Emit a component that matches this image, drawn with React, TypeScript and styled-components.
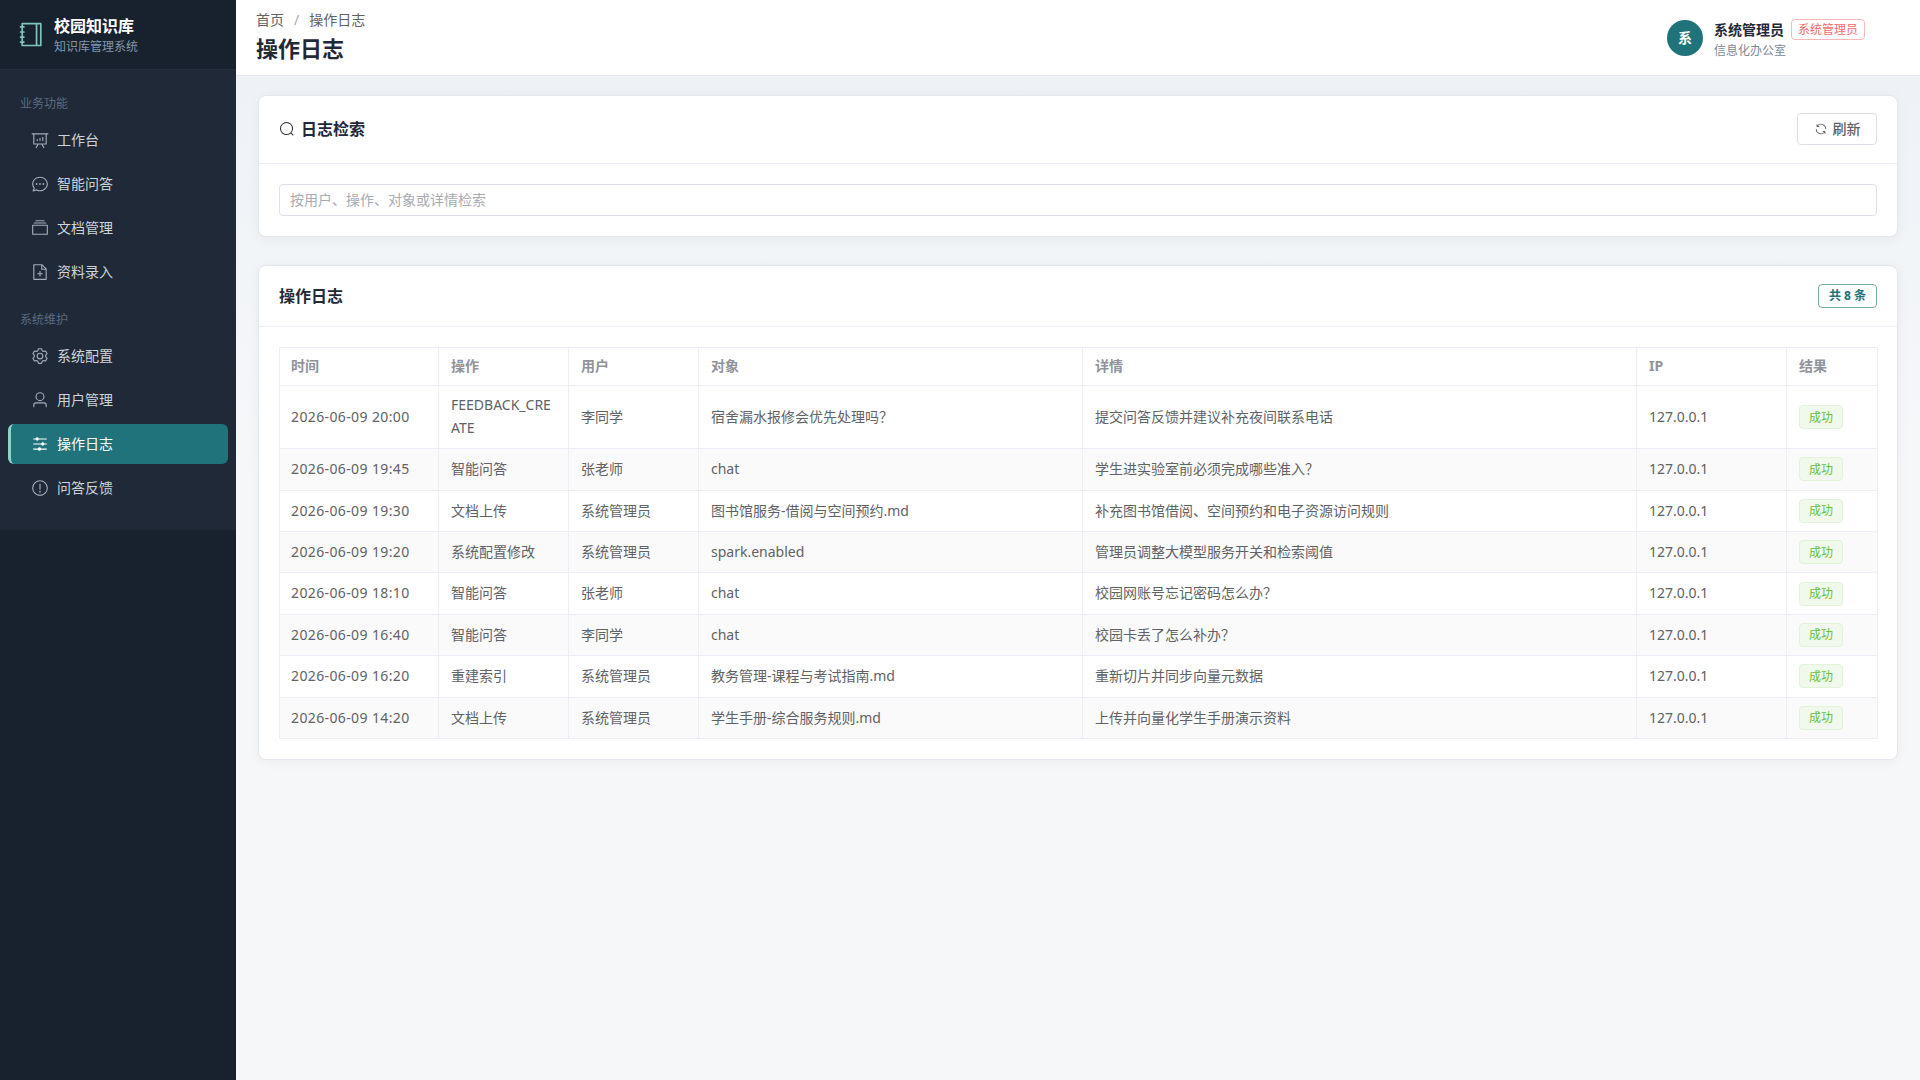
// src/pages/OperationLog.tsx

import styled, { createGlobalStyle } from "styled-components";

const GlobalStyle = createGlobalStyle`
  html, body {
    margin: 0;
    padding: 0;
    height: 100%;
  }
  body {
    font-family: "Noto Sans", "Noto Sans CJK SC", sans-serif;
    font-size: 14px;
    line-height: 1.65;
    color: #1f2937;
  }
  * {
    box-sizing: border-box;
  }
`;

const Shell = styled.div`
  display: flex;
  min-height: 100vh;
`;

const Sidebar = styled.aside`
  flex: 0 0 236px;
  background-color: #18222f;
`;

const Brand = styled.div`
  display: flex;
  align-items: center;
  gap: 9px;
  height: 70px;
  padding-left: 18px;
  border-bottom: 1px solid #242e3c;
`;

const BrandIcon = styled.svg`
  width: 27px;
  height: 27px;
  fill: #7fc6bd;
`;

const BrandText = styled.div`
  display: flex;
  flex-direction: column;
`;

const BrandTitle = styled.span`
  font-size: 16px;
  font-weight: 700;
  line-height: 22px;
  color: #ffffff;
`;

const BrandSub = styled.span`
  margin-top: 2px;
  font-size: 12px;
  line-height: 16px;
  color: #8496aa;
`;

const Nav = styled.nav`
  background-color: #1f2937;
  padding: 18px 8px 18px;
`;

const GroupLabel = styled.div<{ $first?: boolean }>`
  font-size: 12px;
  line-height: 20px;
  color: #5b6a80;
  padding-left: 12px;
  margin: ${(p) => (p.$first ? "6px 0 6px" : "18px 0 6px")};
`;

const MenuItem = styled.a<{ $active?: boolean }>`
  display: flex;
  align-items: center;
  gap: 8px;
  height: 40px;
  margin-bottom: 4px;
  padding-left: ${(p) => (p.$active ? "20px" : "23px")};
  border-radius: 6px;
  font-size: 14px;
  color: ${(p) => (p.$active ? "#ffffff" : "#cdd4dc")};
  background-color: ${(p) => (p.$active ? "#20737a" : "transparent")};
  border-left: ${(p) => (p.$active ? "3px solid #8fd3c8" : "none")};
  fill: ${(p) => (p.$active ? "#ffffff" : "#a3adb9")};
`;

const Icon = styled.svg`
  width: 18px;
  height: 18px;
  flex-shrink: 0;
`;

const Content = styled.div`
  flex: 1;
  min-width: 0;
  display: flex;
  flex-direction: column;
`;

const TopBar = styled.header`
  display: flex;
  align-items: center;
  justify-content: space-between;
  height: 76px;
  padding: 0 55px 0 20px;
  background-color: #ffffff;
  border-bottom: 1px solid #e4e7ed;
`;

const Breadcrumb = styled.div`
  display: flex;
  gap: 10px;
  margin-top: -2px;
  font-size: 14px;
  line-height: 20px;
  color: #606266;
`;

const Slash = styled.span`
  color: #a8abb2;
`;

const PageTitle = styled.h1`
  margin: 3px 0 0;
  font-size: 22px;
  font-weight: 700;
  line-height: 30px;
  color: #1f2937;
`;

const UserBox = styled.div`
  display: flex;
  align-items: center;
  gap: 11px;
`;

const Avatar = styled.div`
  width: 36px;
  height: 36px;
  border-radius: 50%;
  display: flex;
  align-items: center;
  justify-content: center;
  background-color: #20737a;
  color: #ffffff;
  font-size: 14px;
  font-weight: 600;
`;

const UserInfo = styled.div`
  padding-top: 2px;
`;

const UserRow = styled.div`
  display: flex;
  align-items: center;
  gap: 7px;
`;

const UserName = styled.span`
  font-size: 14px;
  font-weight: 600;
  color: #1f2937;
`;

const RoleTag = styled.span`
  height: 21px;
  padding: 0 6px;
  display: inline-flex;
  align-items: center;
  font-size: 12px;
  color: #f56c6c;
  border: 1px solid #fab6b6;
  border-radius: 4px;
  background-color: #ffffff;
`;

const UserDept = styled.div`
  margin-top: 2px;
  font-size: 12px;
  line-height: 16px;
  color: #7f8896;
`;

const Main = styled.main`
  flex: 1;
  padding: 19px 22px;
  display: flex;
  flex-direction: column;
  gap: 28px;
  background: linear-gradient(180deg, #eef2f6 0%, #f6f7f9 40%);
`;

const Card = styled.section`
  background-color: #ffffff;
  border: 1px solid #e4e7ed;
  border-radius: 8px;
  box-shadow: 0 2px 12px rgba(15, 23, 42, 0.05);
`;

const CardHeader = styled.div<{ $tall?: boolean }>`
  display: flex;
  align-items: center;
  justify-content: space-between;
  height: ${(p) => (p.$tall ? "68px" : "61px")};
  padding: ${(p) => (p.$tall ? "0 20px 1px" : "0 20px")};
  border-bottom: 1px solid #ebeef5;
`;

const CardTitle = styled.div`
  display: flex;
  align-items: center;
  gap: 6px;
  font-size: 16px;
  font-weight: 600;
  color: #1f2937;
  fill: #303133;
`;

const CardBody = styled.div`
  padding: 20px;
`;

const RefreshButton = styled.button`
  display: inline-flex;
  align-items: center;
  justify-content: center;
  gap: 5px;
  width: 80px;
  height: 32px;
  padding: 0 0 2px;
  font-family: inherit;
  font-size: 14px;
  font-weight: 500;
  color: #606266;
  fill: #606266;
  background-color: #ffffff;
  border: 1px solid #dcdfe6;
  border-radius: 4px;
`;

const SearchIcon = styled.svg`
  width: 16px;
  height: 16px;
`;

const RefreshIcon = styled.svg`
  width: 14px;
  height: 14px;
  margin-top: 2px;
`;

const SearchInput = styled.input`
  display: block;
  width: 100%;
  height: 32px;
  padding: 0 10px 2px;
  font-family: inherit;
  font-size: 14px;
  border: 1px solid #dcdfe6;
  border-radius: 4px;
  outline: none;

  &::placeholder {
    color: #a8abb2;
  }
`;

const CountTag = styled.span`
  height: 24px;
  padding: 0 10px;
  display: inline-flex;
  align-items: center;
  font-size: 12px;
  font-weight: 700;
  color: #20737a;
  background-color: #ffffff;
  border: 1px solid #79abaf;
  border-radius: 4px;
`;

const Table = styled.table`
  width: 100%;
  table-layout: fixed;
  border-collapse: collapse;
  border: 1px solid #ebeef5;
`;

const Th = styled.th`
  padding: 7px 12px 9px;
  font-size: 14px;
  font-weight: 700;
  line-height: 21px;
  text-align: left;
  color: #909399;
  border: 1px solid #ebeef5;

  &:first-child {
    padding-left: 11px;
  }
`;

const Td = styled.td<{ $date?: boolean; $tag?: boolean }>`
  height: 41.4px;
  padding: ${(p) => (p.$tag ? "8px 12px" : "7.4px 12px 8.6px")};
  font-size: 14px;
  line-height: 23.1px;
  color: #606266;
  border: 1px solid #ebeef5;
  word-break: break-all;
  letter-spacing: ${(p) => (p.$date ? "0.38px" : "normal")};

  &:first-child {
    padding-left: 11px;
  }
`;

const Row = styled.tr`
  &:nth-child(even) {
    background-color: #fafafa;
  }
`;

const SuccessTag = styled.span`
  display: inline-flex;
  align-items: center;
  justify-content: center;
  width: 44px;
  height: 24px;
  vertical-align: top;
  font-size: 12px;
  color: #67c23a;
  background-color: #f0f9eb;
  border: 1px solid #e1f3d8;
  border-radius: 4px;
`;

const paths: Record<string, string> = {
  notebook:
    "M192 128v768h640V128zm-32-64h704a32 32 0 0 1 32 32v832a32 32 0 0 1-32 32H160a32 32 0 0 1-32-32V96a32 32 0 0 1 32-32M672 128h64v768h-64zM96 192h128q32 0 32 32t-32 32H96q-32 0-32-32t32-32m0 192h128q32 0 32 32t-32 32H96q-32 0-32-32t32-32m0 192h128q32 0 32 32t-32 32H96q-32 0-32-32t32-32m0 192h128q32 0 32 32t-32 32H96q-32 0-32-32t32-32",
  board:
    "m665.216 768 110.848 192h-73.856L591.36 768H433.024L322.176 960H248.32l110.848-192H160a32 32 0 0 1-32-32V192H64a32 32 0 0 1 0-64h896a32 32 0 1 1 0 64h-64v544a32 32 0 0 1-32 32zM832 192H192v512h640zM352 448a32 32 0 0 1 32 32v64a32 32 0 0 1-64 0v-64a32 32 0 0 1 32-32m160-64a32 32 0 0 1 32 32v128a32 32 0 0 1-64 0V416a32 32 0 0 1 32-32m160-64a32 32 0 0 1 32 32v192a32 32 0 1 1-64 0V352a32 32 0 0 1 32-32",
  chat:
    "m174.72 855.68 135.296-45.12 23.68 11.84C388.096 849.536 448.576 864 512 864c211.84 0 384-166.784 384-352S723.84 160 512 160 128 326.784 128 512c0 69.12 24.96 139.264 70.848 199.232l22.08 28.8-46.272 115.584zm-45.248 82.56A32 32 0 0 1 89.6 896l58.368-145.92C94.72 680.32 64 596.864 64 512 64 299.904 256 96 512 96s448 203.904 448 416-192 416-448 416a461.06 461.06 0 0 1-206.912-48.384l-175.616 58.56zM512 563.2a51.2 51.2 0 1 1 0-102.4 51.2 51.2 0 0 1 0 102.4m192 0a51.2 51.2 0 1 1 0-102.4 51.2 51.2 0 0 1 0 102.4m-384 0a51.2 51.2 0 1 1 0-102.4 51.2 51.2 0 0 1 0 102.4",
  files:
    "M128 384v448h768V384zm-32-64h832a32 32 0 0 1 32 32v512a32 32 0 0 1-32 32H96a32 32 0 0 1-32-32V352a32 32 0 0 1 32-32m64-128h704v64H160zm96-128h512v64H256z",
  docAdd:
    "M832 384H576V128H192v768h640zm-26.496-64L640 154.496V320zM160 64h480l256 256v608a32 32 0 0 1-32 32H160a32 32 0 0 1-32-32V96a32 32 0 0 1 32-32m320 512V448h64v128h128v64H544v128h-64V640H352v-64z",
  setting:
    "M600.704 64a32 32 0 0 1 30.464 22.208l35.2 109.376c14.784 7.232 28.928 15.36 42.432 24.512l112.384-24.192a32 32 0 0 1 34.432 15.36L944.32 364.8a32 32 0 0 1-4.032 37.504l-77.12 85.12a357 357 0 0 1 0 49.024l77.12 85.248a32 32 0 0 1 4.032 37.504l-88.704 153.6a32 32 0 0 1-34.432 15.296L708.8 803.904c-13.44 9.088-27.648 17.28-42.368 24.512l-35.264 109.376A32 32 0 0 1 600.704 960H423.296a32 32 0 0 1-30.464-22.208L357.696 828.48a352 352 0 0 1-42.56-24.64l-112.32 24.256a32 32 0 0 1-34.432-15.36L79.68 659.2a32 32 0 0 1 4.032-37.504l77.12-85.248a357 357 0 0 1 0-48.896l-77.12-85.248A32 32 0 0 1 79.68 364.8l88.704-153.6a32 32 0 0 1 34.432-15.296l112.32 24.256c13.568-9.152 27.776-17.408 42.56-24.64l35.2-109.312A32 32 0 0 1 423.232 64H600.64zm-23.424 64H446.72l-36.352 113.088-24.512 11.968a294 294 0 0 0-34.816 20.096l-22.656 15.36-116.224-25.088-65.28 113.152 79.68 88.192-1.92 27.136a293 293 0 0 0 0 40.192l1.92 27.136-79.808 88.192 65.344 113.152 116.224-25.024 22.656 15.296a294 294 0 0 0 34.816 20.096l24.512 11.968L446.72 896h130.688l36.48-113.152 24.448-11.904a288 288 0 0 0 34.752-20.096l22.592-15.296 116.288 25.024 65.28-113.152-79.744-88.192 1.92-27.136a293 293 0 0 0 0-40.256l-1.92-27.136 79.808-88.128-65.344-113.152-116.288 24.96-22.592-15.232a288 288 0 0 0-34.752-20.096l-24.448-11.904L577.344 128zM512 320a192 192 0 1 1 0 384 192 192 0 0 1 0-384m0 64a128 128 0 1 0 0 256 128 128 0 0 0 0-256",
  user:
    "M512 512a192 192 0 1 0 0-384 192 192 0 0 0 0 384m0 64a256 256 0 1 1 0-512 256 256 0 0 1 0 512m320 320v-96a96 96 0 0 0-96-96H288a96 96 0 0 0-96 96v96a32 32 0 1 1-64 0v-96a160 160 0 0 1 160-160h448a160 160 0 0 1 160 160v96a32 32 0 1 1-64 0",
  operation:
    "M389.44 768a96.064 96.064 0 0 1 181.12 0H896v64H570.56a96.064 96.064 0 0 1-181.12 0H128v-64zm192-288a96.064 96.064 0 0 1 181.12 0H896v64H762.56a96.064 96.064 0 0 1-181.12 0H128v-64zm-320-288a96.064 96.064 0 0 1 181.12 0H896v64H442.56a96.064 96.064 0 0 1-181.12 0H128v-64z",
  warning:
    "M512 64a448 448 0 1 1 0 896 448 448 0 0 1 0-896m0 832a384 384 0 0 0 0-768 384 384 0 0 0 0 768m48-176a48 48 0 1 1-96 0 48 48 0 0 1 96 0m-48-464a32 32 0 0 1 32 32v288a32 32 0 0 1-64 0V288a32 32 0 0 1 32-32",
  search:
    "m795.904 750.72 124.992 124.928a32 32 0 0 1-45.248 45.248L750.656 795.904a416 416 0 1 1 45.248-45.248zM480 832a352 352 0 1 0 0-704 352 352 0 0 0 0 704",
  refresh:
    "M771.776 794.88A384 384 0 0 1 128 512h64a320 320 0 0 0 555.712 216.448H654.72a32 32 0 1 1 0-64h149.056a32 32 0 0 1 32 32v148.928a32 32 0 1 1-64 0v-50.56zM276.288 295.616h92.992a32 32 0 0 1 0 64H220.16a32 32 0 0 1-32-32V178.56a32 32 0 0 1 64 0v50.56A384 384 0 0 1 896.128 512h-64a320 320 0 0 0-555.776-216.384z",
};

const bizMenu = [
  { icon: "board", label: "工作台" },
  { icon: "chat", label: "智能问答" },
  { icon: "files", label: "文档管理" },
  { icon: "docAdd", label: "资料录入" },
];

const sysMenu = [
  { icon: "setting", label: "系统配置" },
  { icon: "user", label: "用户管理" },
  { icon: "operation", label: "操作日志", active: true },
  { icon: "warning", label: "问答反馈" },
];

const columns = [
  { title: "时间", width: 159 },
  { title: "操作", width: 130 },
  { title: "用户", width: 130 },
  { title: "对象", width: 384 },
  { title: "详情", width: 554 },
  { title: "IP", width: 150 },
  { title: "结果", width: 91 },
];

const logs = [
  ["2026-06-09 20:00", "FEEDBACK_CREATE", "李同学", "宿舍漏水报修会优先处理吗？", "提交问答反馈并建议补充夜间联系电话"],
  ["2026-06-09 19:45", "智能问答", "张老师", "chat", "学生进实验室前必须完成哪些准入？"],
  ["2026-06-09 19:30", "文档上传", "系统管理员", "图书馆服务-借阅与空间预约.md", "补充图书馆借阅、空间预约和电子资源访问规则"],
  ["2026-06-09 19:20", "系统配置修改", "系统管理员", "spark.enabled", "管理员调整大模型服务开关和检索阈值"],
  ["2026-06-09 18:10", "智能问答", "张老师", "chat", "校园网账号忘记密码怎么办？"],
  ["2026-06-09 16:40", "智能问答", "李同学", "chat", "校园卡丢了怎么补办？"],
  ["2026-06-09 16:20", "重建索引", "系统管理员", "教务管理-课程与考试指南.md", "重新切片并同步向量元数据"],
  ["2026-06-09 14:20", "文档上传", "系统管理员", "学生手册-综合服务规则.md", "上传并向量化学生手册演示资料"],
];

const ElIcon = ({ name }: { name: string }) => (
  <Icon viewBox="0 0 1024 1024">
    <path d={paths[name]} />
  </Icon>
);

export default function App() {
  return (
    <Shell>
      <GlobalStyle />
      <Sidebar>
        <Brand>
          <BrandIcon viewBox="0 0 1024 1024">
            <path d={paths.notebook} />
          </BrandIcon>
          <BrandText>
            <BrandTitle>校园知识库</BrandTitle>
            <BrandSub>知识库管理系统</BrandSub>
          </BrandText>
        </Brand>
        <Nav>
          <GroupLabel $first>业务功能</GroupLabel>
          {bizMenu.map((m) => (
            <MenuItem key={m.label}>
              <ElIcon name={m.icon} />
              {m.label}
            </MenuItem>
          ))}
          <GroupLabel>系统维护</GroupLabel>
          {sysMenu.map((m) => (
            <MenuItem key={m.label} $active={m.active}>
              <ElIcon name={m.icon} />
              {m.label}
            </MenuItem>
          ))}
        </Nav>
      </Sidebar>

      <Content>
        <TopBar>
          <div>
            <Breadcrumb>
              <span>首页</span>
              <Slash>/</Slash>
              <span>操作日志</span>
            </Breadcrumb>
            <PageTitle>操作日志</PageTitle>
          </div>
          <UserBox>
            <Avatar>系</Avatar>
            <UserInfo>
              <UserRow>
                <UserName>系统管理员</UserName>
                <RoleTag>系统管理员</RoleTag>
              </UserRow>
              <UserDept>信息化办公室</UserDept>
            </UserInfo>
          </UserBox>
        </TopBar>

        <Main>
          <Card>
            <CardHeader $tall>
              <CardTitle>
                <SearchIcon viewBox="0 0 1024 1024">
                  <path d={paths.search} />
                </SearchIcon>
                日志检索
              </CardTitle>
              <RefreshButton>
                <RefreshIcon viewBox="0 0 1024 1024">
                  <path d={paths.refresh} />
                </RefreshIcon>
                刷新
              </RefreshButton>
            </CardHeader>
            <CardBody>
              <SearchInput placeholder="按用户、操作、对象或详情检索" />
            </CardBody>
          </Card>

          <Card>
            <CardHeader>
              <CardTitle>操作日志</CardTitle>
              <CountTag>共 8 条</CountTag>
            </CardHeader>
            <CardBody>
              <Table>
                <colgroup>
                  {columns.map((c) => (
                    <col key={c.title} width={c.width} />
                  ))}
                </colgroup>
                <thead>
                  <tr>
                    {columns.map((c) => (
                      <Th key={c.title}>{c.title}</Th>
                    ))}
                  </tr>
                </thead>
                <tbody>
                  {logs.map((row) => (
                    <Row key={row[0]}>
                      {row.map((cell, i) => (
                        <Td key={i} $date={i === 0}>
                          {cell}
                        </Td>
                      ))}
                      <Td>127.0.0.1</Td>
                      <Td $tag>
                        <SuccessTag>成功</SuccessTag>
                      </Td>
                    </Row>
                  ))}
                </tbody>
              </Table>
            </CardBody>
          </Card>
        </Main>
      </Content>
    </Shell>
  );
}
